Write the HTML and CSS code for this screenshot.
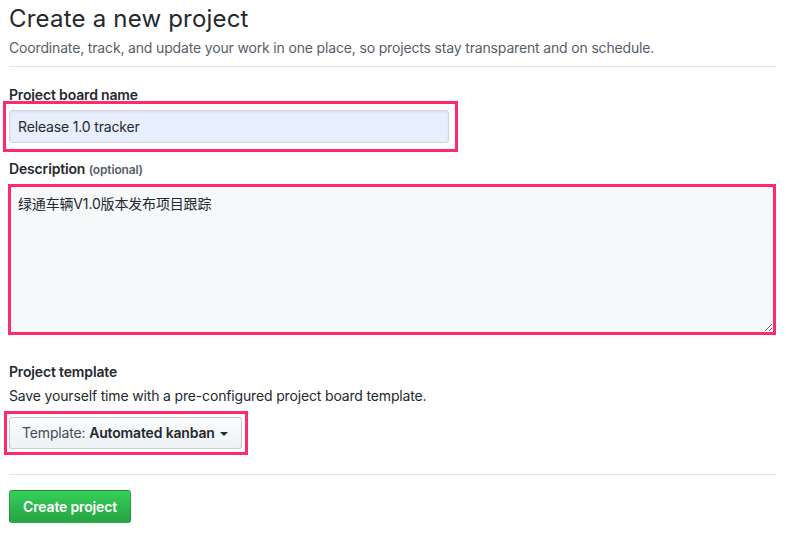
FILE: index.html
```html
<!DOCTYPE html>
<html lang="en">
<head>
<meta charset="utf-8">
<title>Create a new project</title>
<link rel="stylesheet" href="styles.css">
</head>
<body>
<div class="page">
  <div class="subhead">
    <h2 class="subhead-heading">Create a new project</h2>
    <p class="subhead-desc">Coordinate, track, and update your work in one place, so projects stay transparent and on schedule.</p>
  </div>

  <div class="group group-name">
    <label class="label" for="name">Project board name</label>
    <div class="mark mark-name">
      <input id="name" class="form-control name-input" type="text" value="Release 1.0 tracker">
    </div>
  </div>

  <div class="group group-desc">
    <label class="label" for="desc">Description <span class="opt">(optional)</span></label>
    <div class="mark mark-desc">
      <textarea id="desc" class="desc-input">绿通车辆V1.0版本发布项目跟踪</textarea>
    </div>
  </div>

  <div class="group group-template">
    <div class="label">Project template</div>
    <p class="note">Save yourself time with a pre-configured project board template.</p>
    <div class="mark mark-template">
      <button class="btn-select" type="button"><span class="pre">Template: </span><strong>Automated kanban</strong><span class="caret"></span></button>
    </div>
  </div>

  <hr class="divider">

  <button class="btn-primary" type="button">Create project</button>
</div>
</body>
</html>
```

FILE: styles.css
```css
* { box-sizing: border-box; }
html, body { margin: 0; padding: 0; background: #fff; }
body {
  font-family: "Inter", "Noto Sans CJK SC", sans-serif;
  color: #24292e;
  font-size: 14px;
  letter-spacing: -0.16px;
}
.page {
  padding: 4px 13px 0 9px;
}
.subhead {
  border-bottom: 1px solid #e1e4e8;
  padding-bottom: 8px;
}
.subhead-heading {
  margin: 0;
  font-size: 24px;
  font-weight: 400;
  line-height: 30px;
  letter-spacing: 0.2px;
}
.subhead-desc {
  margin: 3px 0 0;
  font-size: 14px;
  line-height: 21px;
  color: #586069;
}
.label {
  display: block;
  font-weight: 600;
  font-size: 14px;
  line-height: 21px;
}
.opt {
  font-size: 12px;
  color: #586069;
}
.group-name { margin-top: 17px; }
.group-name .label { margin-bottom: -4px; }
.group-desc { margin-top: 6px; }
.group-desc .label { margin-bottom: 4px; }
.group-template { margin-top: 26px; }
.mark {
  border: 3px solid #fd2b6b;
}
.mark-name {
  display: inline-block;
  margin-left: -6px;
  padding: 6px 6px 6px 3px;
}
.form-control {
  font-family: inherit;
  font-size: 14px;
  letter-spacing: inherit;
  color: #24292e;
  border: 1px solid #d1d5da;
  border-radius: 3px;
  outline: none;
}
.name-input {
  display: block;
  width: 440px;
  height: 33px;
  padding: 6px 8px;
  background: #e8effc;
  box-shadow: inset 0 1px 2px rgba(27,31,35,0.075);
}
.mark-desc {
  width: 768px;
  margin-left: -1px;
}
.desc-input {
  display: block;
  width: 100%;
  height: 145px;
  border: 0;
  padding: 7px 7px;
  background: #f6f8fa;
  font-family: inherit;
  font-size: 14px;
  letter-spacing: inherit;
  line-height: 20px;
  color: #24292e;
  outline: none;
  resize: vertical;
}
.note {
  margin: 3px 0 0;
  line-height: 21px;
  color: #24292e;
}
.mark-template {
  display: inline-block;
  margin-top: 5px;
  margin-left: -5px;
  padding: 3px 3px 3px 2px;
}
.btn-select {
  display: block;
  height: 32px;
  width: 233px;
  padding: 0 12px;
  text-align: left;
  font-family: inherit;
  font-size: 14px;
  letter-spacing: inherit;
  line-height: 30px;
  color: #24292e;
  background: linear-gradient(#fafbfc, #eff3f6 90%);
  border: 1px solid rgba(27,31,35,0.2);
  border-radius: 3px;
  white-space: nowrap;
}
.btn-select .pre { color: #444d56; font-weight: 400; }
.btn-select strong { font-weight: 600; }
.caret {
  display: inline-block;
  vertical-align: middle;
  width: 0;
  height: 0;
  margin-left: 5px;
  margin-top: -1px;
  border-top: 4px solid #24292e;
  border-left: 4px solid transparent;
  border-right: 4px solid transparent;
}
.divider {
  margin: 19px 0 15px;
  border: 0;
  border-top: 1px solid #e1e4e8;
  height: 0;
}
.btn-primary {
  display: block;
  width: 122px;
  height: 33px;
  padding: 0;
  font-family: inherit;
  font-size: 14px;
  letter-spacing: inherit;
  font-weight: 600;
  color: #fff;
  background: linear-gradient(#34d058, #28a745 90%);
  border: 1px solid rgba(27,31,35,0.2);
  border-radius: 3px;
}
```
